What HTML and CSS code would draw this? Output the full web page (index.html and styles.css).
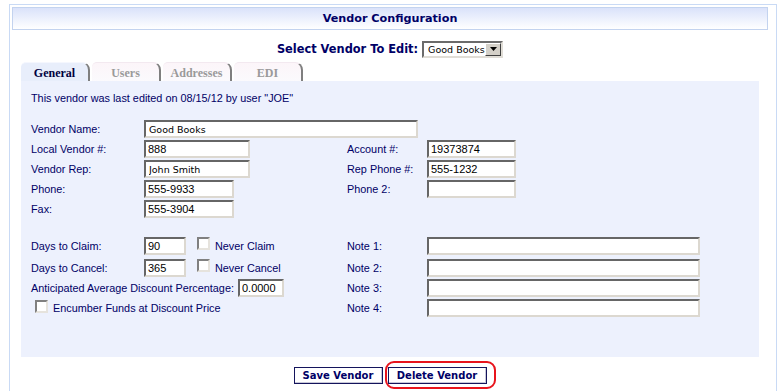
FILE: index.html
```html
<!DOCTYPE html>
<html lang="en">
<head>
  <meta charset="UTF-8" />
  <title>Vendor Configuration</title>
  <link rel="stylesheet" href="styles.css">
</head>
<body>
  <div class="page">
    <div class="titlebar">Vendor Configuration</div>

    <div class="vendor-select">
      <span class="select-label">Select Vendor To Edit:</span>
      <span class="select-box">
        <span class="select-value">Good Books</span>
        <span class="select-btn">
          <svg width="7" height="4" viewBox="0 0 7 4"><path d="M0 0h7L3.5 4z" fill="#000"/></svg>
        </span>
      </span>
    </div>

    <div class="tabs">
      <div class="tab active">General</div>
      <div class="tab">Users</div>
      <div class="tab">Addresses</div>
      <div class="tab">EDI</div>
    </div>

    <div class="panel">
      <div class="note">This vendor was last edited on 08/15/12 by user "JOE"</div>

      <div class="grid general">
        <label class="c1">Vendor Name:</label>
        <input class="field wide-font w-name" value="Good Books">

        <label class="c1">Local Vendor #:</label>
        <input class="field w-code" value="888">
        <label>Account #:</label>
        <input class="field w-acct" value="19373874">

        <label class="c1">Vendor Rep:</label>
        <input class="field wide-font w-code" value="John Smith">
        <label>Rep Phone #:</label>
        <input class="field w-acct" value="555-1232">

        <label class="c1">Phone:</label>
        <input class="field w-phone" value="555-9933">
        <label>Phone 2:</label>
        <input class="field w-acct" value="">

        <label class="c1">Fax:</label>
        <span class="inline">
          <input class="field w-phone" value="555-3904">
        </span>
      </div>

      <div class="grid limits">
        <label>Days to Claim:</label>
        <span class="inline">
          <input class="field w-days" value="90">
          <input type="checkbox" class="check after-days">
          <span class="check-text">Never Claim</span>
        </span>
        <label>Note 1:</label>
        <input class="field w-note" value="">

        <label>Days to Cancel:</label>
        <span class="inline">
          <input class="field w-days" value="365">
          <input type="checkbox" class="check after-days">
          <span class="check-text">Never Cancel</span>
        </span>
        <label>Note 2:</label>
        <input class="field w-note" value="">

        <span class="inline span2">
          <label>Anticipated Average Discount Percentage:</label>
          <input class="field w-pct" value="0.0000">
        </span>
        <label>Note 3:</label>
        <input class="field w-note" value="">

        <span class="inline span2">
          <input type="checkbox" class="check encumber">
          <span class="check-text">Encumber Funds at Discount Price</span>
        </span>
        <label>Note 4:</label>
        <input class="field w-note" value="">
      </div>
    </div>

    <div class="actions">
      <button class="btn btn-save">Save Vendor</button>
      <span class="flagged">
        <button class="btn btn-delete">Delete Vendor</button>
        <span class="flag"></span>
      </span>
    </div>
  </div>
</body>
</html>
```

FILE: styles.css
```css
html, body {
  overflow: hidden;
}

body {
  margin: 0;
  background: #fff;
  color: #000066;
  font-family: "Liberation Sans", Arial, sans-serif;
  font-size: 10.85px;
}

.page {
  margin: 4px 4px 0 9px;
  padding: 2px 8px 30px 2px;
  border: 1px solid #c9daf5;
}

.titlebar {
  box-sizing: border-box;
  height: 23px;
  border: 1px solid #c3d3ef;
  background: linear-gradient(#dae2fa, #eef2fd 55%, #fff);
  text-align: center;
  font: bold 11.2px "DejaVu Sans", Verdana, sans-serif;
  line-height: 21px;
  color: #000066;
}

.vendor-select {
  display: flex;
  justify-content: center;
  align-items: center;
  gap: 4px;
  height: 18px;
  margin-top: 10px;
}

.select-label {
  font: bold 11.4px "DejaVu Sans", Verdana, sans-serif;
}

.select-box {
  box-sizing: border-box;
  display: flex;
  align-items: center;
  width: 81px;
  height: 17px;
  border: 2px solid;
  border-color: #6b6b6b #e0ddd6 #e0ddd6 #6b6b6b;
  background: #fff;
}

.select-value {
  flex: 1;
  padding-left: 4px;
  font: 9.5px "DejaVu Sans", Verdana, sans-serif;
  color: #000;
}

.select-btn {
  box-sizing: border-box;
  display: flex;
  align-items: center;
  justify-content: center;
  width: 16px;
  height: 13px;
  border: 1px solid;
  border-color: #fff #404040 #404040 #fff;
  background: #d4d0c8;
}

.tabs {
  display: flex;
  gap: 2px;
  height: 19px;
  margin: 4px 0 0 9px;
}

.tab {
  width: 67px;
  border-right: 2px solid #7f7f7f;
  border-top: 1px solid #f3e9f0;
  border-radius: 5px 8px 0 0;
  background: linear-gradient(#fcf5f9, #fbfafd);
  text-align: center;
  font: bold 12px "Liberation Serif", "Times New Roman", serif;
  line-height: 20px;
  color: #9a9a9a;
}

.tab.active {
  border-top-color: #f5f7fe;
  background: #e8eefb;
  color: #000040;
}

.panel {
  margin: 0 9px;
  padding: 10px 10px 39px;
  background: #edf1fd;
}

.note {
  line-height: 14px;
}

.grid {
  display: grid;
  grid-template-columns: 113px 203px 80px 1fr;
  align-items: center;
}

.grid.general {
  margin-top: 14px;
  grid-auto-rows: 20px;
}

.grid.limits {
  margin-top: 15px;
  grid-template-rows: 23px 21px 20px 20px;
}

.c1 {
  grid-column: 1;
}

.span2 {
  grid-column: 1 / 3;
}

.inline {
  display: flex;
  align-items: center;
}

.field {
  box-sizing: border-box;
  height: 18px;
  margin: 0;
  padding: 0 2px;
  border: 2px solid;
  border-color: #666 #dcd8d0 #dcd8d0 #666;
  background: #fff;
  font: 11px "Liberation Sans", Arial, sans-serif;
  color: #000;
  outline: none;
}

.field.wide-font {
  font: 9.5px "DejaVu Sans", Verdana, sans-serif;
  padding-left: 3px;
}

.w-name { grid-column: 2 / span 2; width: 274px; }
.w-code { width: 106px; }
.w-phone { width: 90px; }
.w-acct { width: 89px; }
.w-days { width: 42px; }
.w-pct { width: 46px; margin-left: 4px; }
.w-note { width: 273px; }

.check {
  appearance: none;
  box-sizing: border-box;
  width: 13px;
  height: 13px;
  margin: 0 0 4px;
  border: 2px solid;
  border-color: #808080 #e6e3dd #e6e3dd #808080;
  background: #fff;
}

.check.after-days {
  margin-left: 11px;
}

.check.encumber {
  margin-left: 4px;
}

.check-text {
  margin-left: 5px;
}

.actions {
  display: flex;
  justify-content: center;
  gap: 5px;
  margin-top: 10px;
}

.btn {
  height: 17px;
  padding: 0;
  border: 1px solid #14145c;
  box-shadow: inset -1px -1px 0 #c8c8d8;
  background: #fff;
  font: bold 10px "DejaVu Sans", Verdana, sans-serif;
  color: #000066;
}

.btn-save {
  width: 89px;
}

.btn-delete {
  width: 99px;
}

.flagged {
  position: relative;
  display: flex;
}

.flag {
  position: absolute;
  left: -3px;
  right: -9px;
  top: -6px;
  bottom: -5px;
  border: 2px solid #e8141c;
  border-radius: 9px;
}
```
